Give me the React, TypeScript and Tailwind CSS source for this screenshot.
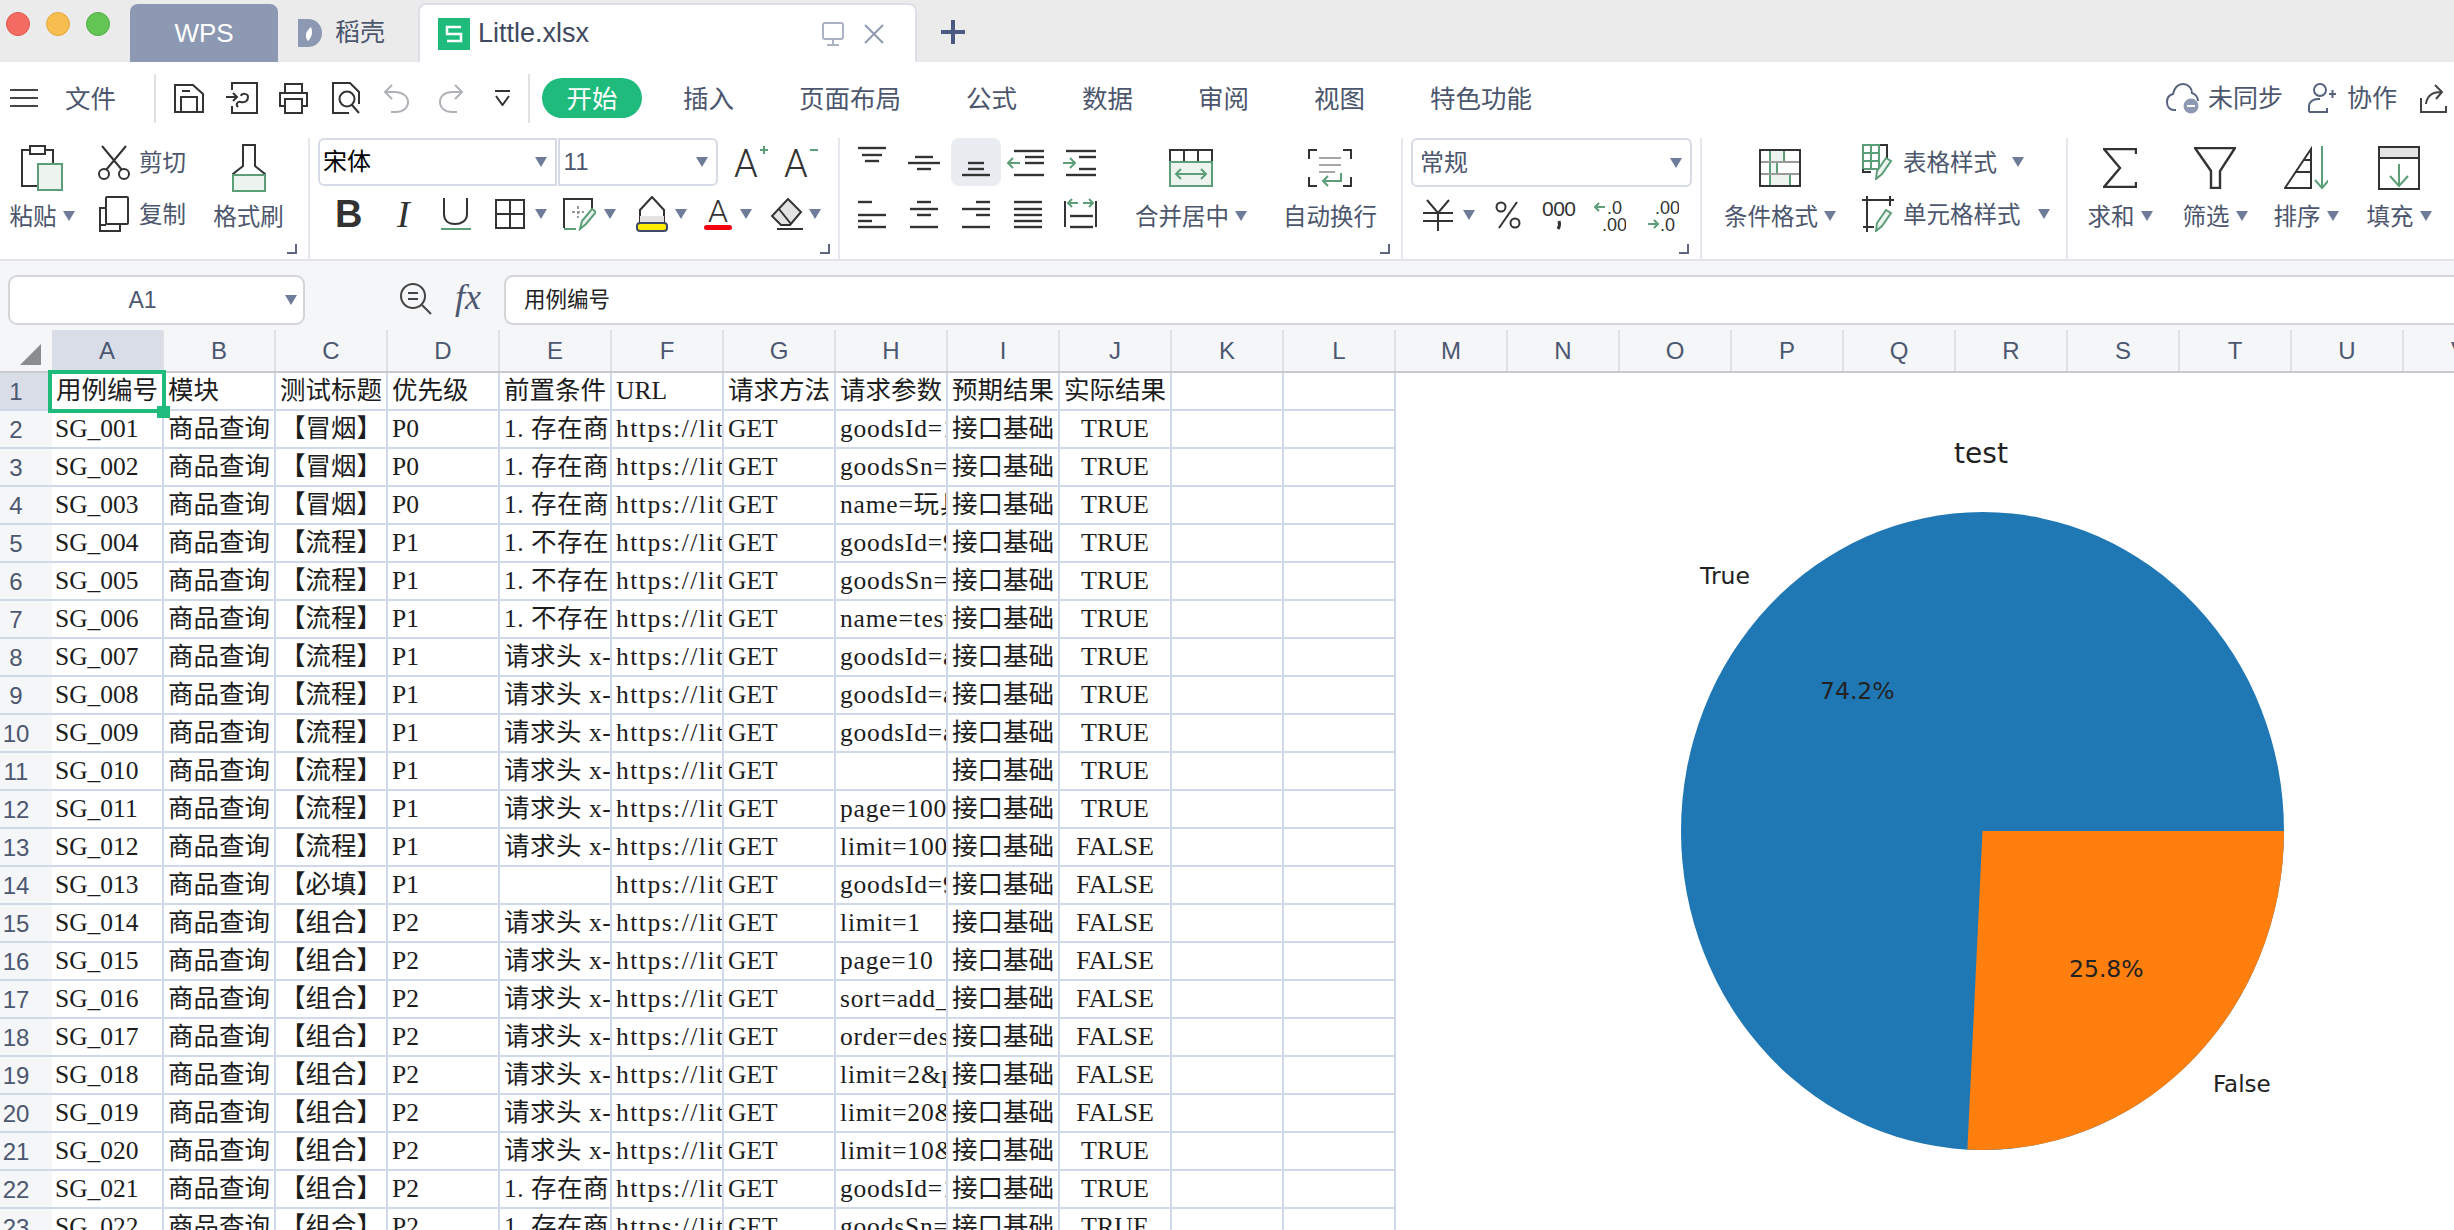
import type { ReactNode } from "react";

const DARK = "#333333";
const GREEN = "#5b9e78";
const PALE = "#edf4ef";

type RowData = {
  id: string;
  title: string;
  pri: string;
  pre: string;
  param: string;
  result: string;
};

const EXIST = "1. 存在商品信息";
const MISSING = "1. 不存在商品信息";
const HEAD = "请求头 x-litemall-token";

const rows: RowData[] = [
  { id: "SG_001", title: "【冒烟】", pri: "P0", pre: EXIST, param: "goodsId=1181000", result: "TRUE" },
  { id: "SG_002", title: "【冒烟】", pri: "P0", pre: EXIST, param: "goodsSn=1181000", result: "TRUE" },
  { id: "SG_003", title: "【冒烟】", pri: "P0", pre: EXIST, param: "name=玩具", result: "TRUE" },
  { id: "SG_004", title: "【流程】", pri: "P1", pre: MISSING, param: "goodsId=9999", result: "TRUE" },
  { id: "SG_005", title: "【流程】", pri: "P1", pre: MISSING, param: "goodsSn=9999", result: "TRUE" },
  { id: "SG_006", title: "【流程】", pri: "P1", pre: MISSING, param: "name=test", result: "TRUE" },
  { id: "SG_007", title: "【流程】", pri: "P1", pre: HEAD, param: "goodsId=abc", result: "TRUE" },
  { id: "SG_008", title: "【流程】", pri: "P1", pre: HEAD, param: "goodsId=abc", result: "TRUE" },
  { id: "SG_009", title: "【流程】", pri: "P1", pre: HEAD, param: "goodsId=abc", result: "TRUE" },
  { id: "SG_010", title: "【流程】", pri: "P1", pre: HEAD, param: "", result: "TRUE" },
  { id: "SG_011", title: "【流程】", pri: "P1", pre: HEAD, param: "page=10000", result: "TRUE" },
  { id: "SG_012", title: "【流程】", pri: "P1", pre: HEAD, param: "limit=1000", result: "FALSE" },
  { id: "SG_013", title: "【必填】", pri: "P1", pre: "", param: "goodsId=9999", result: "FALSE" },
  { id: "SG_014", title: "【组合】", pri: "P2", pre: HEAD, param: "limit=1", result: "FALSE" },
  { id: "SG_015", title: "【组合】", pri: "P2", pre: HEAD, param: "page=10", result: "FALSE" },
  { id: "SG_016", title: "【组合】", pri: "P2", pre: HEAD, param: "sort=add_time", result: "FALSE" },
  { id: "SG_017", title: "【组合】", pri: "P2", pre: HEAD, param: "order=desc", result: "FALSE" },
  { id: "SG_018", title: "【组合】", pri: "P2", pre: HEAD, param: "limit=2&page=1", result: "FALSE" },
  { id: "SG_019", title: "【组合】", pri: "P2", pre: HEAD, param: "limit=20&page=1", result: "FALSE" },
  { id: "SG_020", title: "【组合】", pri: "P2", pre: HEAD, param: "limit=10&page=1", result: "TRUE" },
  { id: "SG_021", title: "【组合】", pri: "P2", pre: EXIST, param: "goodsId=1181000", result: "TRUE" },
  { id: "SG_022", title: "【组合】", pri: "P2", pre: EXIST, param: "goodsSn=1181000", result: "TRUE" },
];

const headers = ["用例编号", "模块", "测试标题", "优先级", "前置条件", "URL", "请求方法", "请求参数", "预期结果", "实际结果", "", ""];
const letters = "ABCDEFGHIJKLMNOPQRSTUV".split("");

function Ico({ w, h, children, className }: { w: number; h: number; children: ReactNode; className?: string }) {
  return (
    <svg width={w} height={h} viewBox={`0 0 ${w} ${h}`} fill="none" stroke={DARK} strokeWidth={2} className={`shrink-0 ${className ?? ""}`}>
      {children}
    </svg>
  );
}

function Caret({ className }: { className?: string }) {
  return (
    <svg width={12} height={10} viewBox="0 0 12 10" className={`shrink-0 ${className ?? ""}`}>
      <path d="M0 0h12L6 10z" fill="#6f7c99" />
    </svg>
  );
}

function Corner({ className }: { className?: string }) {
  return (
    <svg width={10} height={10} viewBox="0 0 10 10" className={`shrink-0 self-end mb-[5px] ${className ?? ""}`}>
      <path d="M9 0v9H0" fill="none" stroke="#5d6880" strokeWidth={2} />
    </svg>
  );
}

function BigBtn({ label, icon, caret, className }: { label: string; icon: ReactNode; caret?: boolean; className?: string }) {
  return (
    <div className={`flex flex-col items-center shrink-0 ${className ?? ""}`}>
      <div className="flex h-[60px] items-center justify-center">{icon}</div>
      <div className="mt-[3px] flex h-[30px] items-center gap-[6px] text-[23.5px] whitespace-nowrap">
        <span className="mt-[3px]">{label}</span>
        {caret && <Caret />}
      </div>
    </div>
  );
}

function SmallBtn({ label, icon, caretGap }: { label: string; icon: ReactNode; caretGap?: string }) {
  return (
    <div className="flex h-[48px] items-center">
      <div className="flex w-[32px] justify-center">{icon}</div>
      <span className="ml-[9px] mt-[3px] text-[23.5px] whitespace-nowrap">{label}</span>
      {caretGap && <Caret className={caretGap} />}
    </div>
  );
}

function Brush({ x, y }: { x: number; y: number }) {
  return (
    <g transform={`translate(${x} ${y})`} stroke={GREEN} fill={PALE}>
      <path d="M2 22l1-8 9-13 5 3-9 13z" />
    </g>
  );
}

function AlignCell({ lines, active, arrow }: { lines: number[][]; active?: boolean; arrow?: ReactNode }) {
  return (
    <div className="flex h-[48px] w-[52px] justify-center">
      <div className={`h-[48px] w-[50px] rounded-[8px] ${active ? "bg-[#e9ecf1]" : ""}`}>
        <Ico w={50} h={48}>
          {lines.map((l, i) => (
            <line key={i} x1={l[0]} y1={l[2]} x2={l[1]} y2={l[2]} stroke={DARK} strokeWidth={2.4} />
          ))}
          {arrow}
        </Ico>
      </div>
    </div>
  );
}

function MenuRow() {
  return (
    <div className="flex h-[72px] items-center bg-white text-[25.5px] text-[#4c566d]">
      <Ico w={28} h={20} className="ml-[10px]">
        <path d="M0 2h28M0 10h28M0 18h28" stroke="#444" strokeWidth={2.2} />
      </Ico>
      <span className="ml-[27px] mt-[2px] w-[50px] whitespace-nowrap">文件</span>
      <div className="ml-[39px] h-[49px] w-[2px] bg-[#e0e2e6]" />
      <Ico w={30} h={29} className="ml-[18px]">
        <path d="M1 1h18l10 9v18H1z" />
        <path d="M7 27V13h16v14M8 7h8" />
      </Ico>
      <Ico w={32} h={32} className="ml-[22px]">
        <path d="M6 8V1h25v30H6v-7" />
        <path d="M0 15h11M7 11l4 4-4 4" />
        <path d="M12 25c-3-3 0-6 3-5 5 1 7-2 7-5 0-4-6-4-7-1" />
      </Ico>
      <Ico w={31} h={32} className="ml-[20px]">
        <path d="M7 11V2h17v9M7 24H2V11h27v13h-5" />
        <path d="M7 17h17v14H7z" />
      </Ico>
      <Ico w={29} h={33} className="ml-[23px]">
        <path d="M17 31H1V1h17l9 9v12" />
        <circle cx={15} cy={17} r={7.5} />
        <path d="M20 23l7 8" />
      </Ico>
      <Ico w={27} h={29} className="ml-[22px]">
        <path d="M9 1L2 8l7 7" stroke="#aeb1b6" />
        <path d="M2 8h10c7 0 13 4 13 10s-5 10-12 10H8" stroke="#aeb1b6" />
      </Ico>
      <Ico w={26} h={29} className="ml-[28px]">
        <path d="M17 1l7 7-7 7" stroke="#aeb1b6" />
        <path d="M24 8H14C7 8 2 12 2 18s5 10 12 10h5" stroke="#aeb1b6" />
      </Ico>
      <Ico w={17} h={16} className="ml-[30px]">
        <path d="M1 1h15" />
        <path d="M2 6l6.500 9L15 6" />
      </Ico>
      <div className="ml-[17px] h-[49px] w-[2px] bg-[#e0e2e6]" />
      <div className="ml-[12px] flex h-[40px] w-[100px] items-center justify-center rounded-full bg-[#1fbb7d] pt-[2px] text-white">开始</div>
      <div className="ml-[41px] mt-[2px] flex gap-[65px] whitespace-nowrap">
        <span>插入</span>
        <span>页面布局</span>
        <span>公式</span>
        <span>数据</span>
        <span>审阅</span>
        <span>视图</span>
        <span>特色功能</span>
      </div>
      <div className="ml-auto mr-[7px] flex items-center text-[25px]">
        <Ico w={34} h={32}>
          <path d="M10 28H8C3 28 1 24 1 20c0-4 2-7 6-8 1-6 5-10 10-10s9 4 9 9c3 1 6 4 6 8" stroke="#56627e" />
          <circle cx={25} cy={24} r={7.5} fill="#8d99b2" stroke="none" />
          <path d="M21 24h8" stroke="#fff" />
        </Ico>
        <span className="ml-[8px] mt-[2px] whitespace-nowrap">未同步</span>
        <Ico w={28} h={32} className="ml-[25px]">
          <circle cx={12} cy={8} r={6} stroke="#56627e" />
          <path d="M1 30v-6c0-4 4-7 9-7h2M1 30h18v-4M21 12h7M24.500 8v8" stroke="#56627e" />
        </Ico>
        <span className="ml-[11px] mt-[2px] whitespace-nowrap">协作</span>
        <Ico w={27} h={29} className="ml-[23px]">
          <path d="M1 14v14h25v-6M6 20c1-8 6-12 15-12M15 1l7 7-6 7" stroke="#444" />
        </Ico>
      </div>
    </div>
  );
}

function Ribbon() {
  return (
    <div className="box-border flex h-[127px] border-b-[2px] border-[#e3e4e8] bg-white pt-[4px] text-[#4c566d]">
      {/* clipboard */}
      <div className="box-border flex h-[121px] w-[310px] shrink-0 border-r-2 border-[#e6e8ed]">
        <BigBtn
          caret
          label="粘贴"
          className="ml-[8px] w-[68px]"
          icon={
            <Ico w={42} h={46}>
              <path d="M17 41H1V5h31v13" />
              <rect x={9} y={1} width={15} height={8} fill="#fff" />
              <rect x={17} y={19} width={24} height={26} fill={PALE} stroke={GREEN} />
            </Ico>
          }
        />
        <div className="ml-[22px] flex w-[100px] flex-col gap-[4px]">
          <SmallBtn
            label="剪切"
            icon={
              <Ico w={32} h={35}>
                <path d="M4 1l20 24M28 1L8 25" />
                <circle cx={6} cy={29} r={5} />
                <circle cx={26} cy={29} r={5} />
              </Ico>
            }
          />
          <SmallBtn
            label="复制"
            icon={
              <Ico w={30} h={36}>
                <path d="M7 29H1V12h6" />
                <path d="M1 29v6h20v-7" />
                <rect x={7} y={1} width={22} height={27} rx={1} />
              </Ico>
            }
          />
        </div>
        <BigBtn
          label="格式刷"
          className="ml-[15px] w-[71px]"
          icon={
            <Ico w={36} h={48}>
              <path d="M12 22V1h12v21l10 8v17H2V30z" />
              <path d="M2 31h32v16H2z" fill={PALE} stroke={GREEN} />
            </Ico>
          }
        />
        <Corner className="ml-[3px]" />
      </div>

      {/* font */}
      <div className="box-border flex h-[121px] w-[530px] shrink-0 border-r-2 border-[#e6e8ed]">
        <div className="ml-[8px] flex w-[500px] flex-col gap-[4px]">
          <div className="flex h-[48px] items-center">
            <div className="box-border flex h-[48px] w-[241px] items-center rounded-l-[6px] border-2 border-[#d6dbe7] pl-[3px] pr-[8px] text-[24px] text-black">
              <span>宋体</span>
              <Caret className="ml-auto" />
            </div>
            <div className="ml-[1px] box-border flex h-[48px] w-[162px] items-center rounded-r-[6px] border-2 border-[#d6dbe7] pl-[4px] pr-[8px] text-[24px] text-[#4c566d]">
              <span>11</span>
              <Caret className="ml-auto" />
            </div>
            <Ico w={34} h={36} className="ml-[16px]">
              <text x={0} y={33} fontSize={38} stroke="none" fill={DARK} fontFamily="Roboto" fontWeight={300}>A</text>
              <path d="M26 6h8M30 2v8" stroke={GREEN} />
            </Ico>
            <Ico w={34} h={36} className="ml-[16px]">
              <text x={0} y={33} fontSize={38} stroke="none" fill={DARK} fontFamily="Roboto" fontWeight={300}>A</text>
              <path d="M26 6h8" stroke={GREEN} />
            </Ico>
          </div>
          <div className="flex h-[48px] items-center">
            <span className="ml-[17px] w-[26px] text-[38px] font-bold text-[#333] [font-family:'Liberation_Sans',sans-serif]">B</span>
            <span className="ml-[36px] w-[18px] text-[38px] italic text-[#333] [font-family:'Liberation_Serif',serif]">I</span>
            <Ico w={30} h={32} className="ml-[31px]">
              <path d="M3 0v16c0 7 5 10 11 10s12-3 12-10V0" />
              <path d="M0 31h30" stroke={GREEN} />
            </Ico>
            <Ico w={30} h={30} className="ml-[24px]">
              <rect x={1} y={1} width={28} height={28} />
              <path d="M15 1v28M1 15h28" />
            </Ico>
            <Caret className="ml-[10px]" />
            <Ico w={33} h={33} className="ml-[16px]">
              <path d="M1 30V1h28v12" />
              <path d="M15 8v12M9 14h12" stroke="#999" strokeDasharray="3 2" />
              <path d="M1 31h12" stroke={GREEN} />
              <path d="M17 31l2-8 10-12 4 3-10 12z" stroke={GREEN} fill={PALE} />
            </Ico>
            <Caret className="ml-[8px]" />
            <Ico w={34} h={36} className="ml-[19px]">
              <path d="M17 1L5 14v13h24V14z" />
              <path d="M5 20h24v7H5z" fill="#e3e3e3" stroke="none" />
              <rect x={2} y={27} width={30} height={8} rx={3} fill="#ffee00" stroke="#3f4a68" />
            </Ico>
            <Caret className="ml-[6px]" />
            <Ico w={30} h={34} className="ml-[16px]">
              <text x={15} y={25} textAnchor="middle" fontSize={32} stroke="none" fill={DARK} fontFamily="Roboto" fontWeight={300}>A</text>
              <rect x={1} y={28} width={28} height={5} rx={2.500} fill="#f5000f" stroke="none" />
            </Ico>
            <Caret className="ml-[7px]" />
            <Ico w={36} h={32} className="ml-[17px]">
              <path d="M19 1l13 13-11 13H12L3 18z" fill="#e3e3e3" />
              <path d="M10 11l12 15M8 31h26" />
            </Ico>
            <Caret className="ml-[4px]" />
          </div>
        </div>
        <Corner className="ml-[2px]" />
      </div>

      {/* alignment */}
      <div className="box-border flex h-[121px] w-[563px] shrink-0 border-r-2 border-[#e6e8ed]">
        <div className="ml-[6px] grid w-[260px] shrink-0 grid-cols-5 content-start gap-y-[4px]">
          <AlignCell lines={[[11, 39, 10], [15, 35, 17], [18, 32, 23]]} />
          <AlignCell lines={[[16, 34, 19], [9, 41, 25], [18, 32, 31]]} />
          <AlignCell active lines={[[17, 33, 25], [17, 33, 31], [11, 39, 37]]} />
          <AlignCell
            lines={[[11, 41, 13], [22, 41, 19], [22, 41, 25], [11, 41, 37]]}
            arrow={<path d="M17 25H6M10 20l-5 5 5 5" stroke={GREEN} />}
          />
          <AlignCell
            lines={[[11, 41, 13], [24, 41, 19], [24, 41, 31], [11, 41, 37]]}
            arrow={<path d="M8 25h11M15 20l5 5-5 5" stroke={GREEN} />}
          />
          <AlignCell lines={[[11, 25, 12], [11, 39, 25], [11, 25, 31], [11, 39, 37]]} />
          <AlignCell lines={[[18, 32, 12], [11, 39, 19], [18, 32, 25], [11, 39, 37]]} />
          <AlignCell lines={[[25, 39, 12], [11, 39, 19], [25, 39, 25], [11, 39, 37]]} />
          <AlignCell lines={[[11, 39, 12], [11, 39, 19], [11, 39, 25], [11, 39, 31], [11, 39, 37]]} />
          <AlignCell
            lines={[[15, 38, 26], [15, 38, 37]]}
            arrow={
              <>
                <path d="M10 11v26M41 11v26" />
                <path d="M14 13h9M17 9l-4 4 4 4M28 13h9M34 9l4 4-4 4" stroke={GREEN} />
              </>
            }
          />
        </div>
        <BigBtn
          caret
          label="合并居中"
          className="ml-[24px] w-[122px]"
          icon={
            <Ico w={44} h={38}>
              <path d="M1 13V1h42v12M15 1v12M29 1v12" />
              <rect x={1} y={13} width={42} height={24} fill={PALE} stroke={GREEN} />
              <path d="M7 25h30M12 20l-5 5 5 5M32 20l5 5-5 5" stroke={GREEN} />
            </Ico>
          }
        />
        <BigBtn
          label="自动换行"
          className="ml-[30px] w-[96px]"
          icon={
            <Ico w={44} h={38}>
              <path d="M9 1H1v9M35 1h8v9M1 28v9h8M43 28v9h-8" />
              <path d="M11 9h22M11 16h22M11 23h16" stroke="#a6a6a6" />
              <path d="M33 24v8H15M20 27l-5 5 5 5" stroke={GREEN} />
            </Ico>
          }
        />
        <Corner className="ml-[2px]" />
      </div>

      {/* number format */}
      <div className="box-border flex h-[121px] w-[299px] shrink-0 border-r-2 border-[#e6e8ed]">
        <div className="ml-[8px] flex w-[281px] shrink-0 flex-col gap-[4px]">
          <div className="box-border flex h-[49px] items-center rounded-[6px] border-2 border-[#d6dbe7] pl-[7px] pr-[8px] text-[24px]">
            <span>常规</span>
            <Caret className="ml-auto" />
          </div>
          <div className="flex h-[47px] items-center">
            <Ico w={30} h={32} className="ml-[12px]">
              <path d="M4 1l11 13L26 1M15 14v18M0 14h30M0 22h30" />
            </Ico>
            <Caret className="ml-[10px]" />
            <Ico w={26} h={28} className="ml-[20px]">
              <circle cx={6} cy={6} r={4.500} />
              <circle cx={20} cy={22} r={4.500} />
              <path d="M22 1L4 27" />
            </Ico>
            <Ico w={34} h={32} className="ml-[21px]">
              <text x={0} y={17} fontSize={21} stroke="none" fill={DARK} fontFamily="Liberation Sans" textLength={34}>000</text>
              <path d="M17 22c1 3 1 5-1 8" strokeWidth={3} />
            </Ico>
            <Ico w={32} h={34} className="ml-[18px]">
              <path d="M11 9H1M5 5L1 9l4 4" stroke={GREEN} />
              <text x={13} y={16} fontSize={18} stroke="none" fill={DARK} fontFamily="Liberation Sans">.0</text>
              <text x={8} y={33} fontSize={18} stroke="none" fill={DARK} fontFamily="Liberation Sans">.00</text>
            </Ico>
            <Ico w={32} h={34} className="ml-[21px]">
              <text x={8} y={16} fontSize={18} stroke="none" fill={DARK} fontFamily="Liberation Sans">.00</text>
              <path d="M1 26h10M7 22l4 4-4 4" stroke={GREEN} />
              <text x={13} y={33} fontSize={18} stroke="none" fill={DARK} fontFamily="Liberation Sans">.0</text>
            </Ico>
          </div>
        </div>
        <Corner className="-ml-[13px]" />
      </div>

      {/* table styles */}
      <div className="box-border flex h-[121px] w-[366px] shrink-0 border-r-2 border-[#e6e8ed]">
        <BigBtn
          caret
          label="条件格式"
          className="ml-[18px] w-[120px]"
          icon={
            <Ico w={42} h={38}>
              <path d="M11 1h14v12H18v12h-7z" fill={PALE} stroke={GREEN} />
              <path d="M11 25h20v12H11z" fill={PALE} stroke={GREEN} />
              <path d="M1 13h40M1 25h40" stroke="#999" />
              <rect x={1} y={1} width={40} height={36} />
            </Ico>
          }
        />
        <div className="ml-[22px] flex flex-col gap-[4px]">
          <SmallBtn
            label="表格样式"
            caretGap="ml-[15px]"
            icon={
              <Ico w={32} h={36}>
                <path d="M17 1h8v19" />
                <path d="M1 1h16v24H1zM1 9h16M1 17h16M9 1v24" stroke={GREEN} />
                <path d="M1 25v3h8" />
                <Brush x={12} y={13} />
              </Ico>
            }
          />
          <SmallBtn
            label="单元格样式"
            caretGap="ml-[17px]"
            icon={
              <Ico w={32} h={36}>
                <path d="M5 0v36M0 4h32M1 31h11M28 0v10" />
                <Brush x={12} y={13} />
              </Ico>
            }
          />
        </div>
      </div>

      {/* editing */}
      <div className="flex h-[121px] flex-1">
        <BigBtn
          caret
          label="求和"
          className="ml-[17px] w-[70px]"
          icon={
            <Ico w={34} h={40}>
              <path d="M33 6V1H1l16 19L1 39h32v-5" strokeWidth={2.400} />
            </Ico>
          }
        />
        <BigBtn
          caret
          label="筛选"
          className="ml-[25px] w-[70px]"
          icon={
            <Ico w={42} h={42}>
              <path d="M1 1h40L26 24v17h-9V24z" strokeWidth={2.400} />
            </Ico>
          }
        />
        <BigBtn
          caret
          label="排序"
          className="ml-[21px] w-[70px]"
          icon={
            <Ico w={44} h={44}>
              <path d="M27 3L1 42h26zM12 26h15M19 14h8" />
              <path d="M38 0v42M31 34l7 8 7-8" stroke={GREEN} />
            </Ico>
          }
        />
        <BigBtn
          caret
          label="填充"
          className="ml-[23px] w-[70px]"
          icon={
            <Ico w={42} h={44}>
              <rect x={1} y={1} width={40} height={42} />
              <path d="M1 1h40v11H1z" fill="#e3e3e3" />
              <path d="M21 18v22M12 30l9 10 9-10" stroke={GREEN} />
            </Ico>
          }
        />
      </div>
    </div>
  );
}

function FormulaBar() {
  return (
    <div className="flex h-[69px] bg-[#f5f6f8] pt-[14px]">
      <div className="relative ml-[8px] box-border flex h-[50px] w-[297px] items-center justify-center rounded-[9px] border-2 border-[#d4d5d8] bg-white pr-[28px] text-[23px] text-[#4c5770]">
        <span>A1</span>
        <Caret className="absolute right-[6px] top-[18px]" />
      </div>
      <Ico w={32} h={32} className="ml-[95px] mt-[8px]">
        <circle cx={13} cy={13} r={12} stroke="#444" />
        <path d="M8 10h10M8 16h10" stroke="#444" />
        <path d="M22 22l9 9" stroke="#444" />
      </Ico>
      <span className="ml-[23px] w-[30px] text-[36px] italic leading-[44px] text-[#4c5770] [font-family:'Liberation_Serif',serif]">fx</span>
      <div className="ml-[19px] box-border flex h-[50px] flex-1 items-center rounded-l-[9px] border-2 border-r-0 border-[#d4d5d8] bg-white pl-[18px] text-[21.500px] text-[#222]">
        用例编号
      </div>
    </div>
  );
}

function ColumnHeader() {
  return (
    <div className="flex h-[43px] border-b-2 border-[#c9cacd] bg-[#f5f6f8] text-[24px] text-[#4c5770]">
      <div className="flex w-[52px] shrink-0 items-center pl-[20px]">
        <svg width={21} height={21} viewBox="0 0 21 21" className="mt-[8px]">
          <path d="M21 0v21H0z" fill="#8b8c8e" />
        </svg>
      </div>
      {letters.map((l, i) => (
        <div
          key={l}
          className={`box-border flex w-[112px] shrink-0 items-center justify-center border-r-2 border-[#dfe0e3] ${i === 0 ? "bg-[#d9dde8]" : ""}`}
        >
          {l}
        </div>
      ))}
    </div>
  );
}

function Cell({ children, center, extra }: { children?: ReactNode; center?: boolean; extra?: string }) {
  return (
    <div
      className={`box-border h-full w-[112px] shrink-0 overflow-hidden whitespace-nowrap border-r-2 border-[#d0d9ea] leading-[36px] ${center ? "text-center" : "pl-[4px]"} ${extra ?? ""}`}
    >
      {children}
    </div>
  );
}

function RowLabel({ n, active }: { n: number; active?: boolean }) {
  return (
    <div className={`h-full w-[52px] shrink-0 text-[#4c5770] [font-family:'Liberation_Sans',sans-serif] ${active ? "bg-[#d9dde8]" : "bg-[#f5f6f8]"}`}>
      <div className="w-[32px] text-center text-[24px] leading-[38px]">{n}</div>
    </div>
  );
}

function Sheet() {
  return (
    <div className="relative w-[1396px] shrink-0 text-[25.5px] text-[#1d1d1d] [font-family:'Liberation_Serif','Noto_Sans_CJK_SC',serif]">
      <div className="box-border flex h-[38px] border-b-2 border-[#d0d9ea]">
        <RowLabel n={1} active />
        {headers.map((h, i) => (
          <Cell key={i} center={i === 9}>
            {h}
          </Cell>
        ))}
      </div>
      {rows.map((r, i) => (
        <div key={r.id} className="box-border flex h-[38px] border-b-2 border-[#d0d9ea]">
          <RowLabel n={i + 2} />
          <Cell>
            <span className="-ml-[1px]">{r.id}</span>
          </Cell>
          <Cell>商品查询</Cell>
          <Cell>{r.title}</Cell>
          <Cell>{r.pri}</Cell>
          <Cell extra="tracking-[0.5px]">{r.pre}</Cell>
          <Cell extra="tracking-[1.5px]">https://litemall.com</Cell>
          <Cell>GET</Cell>
          <Cell extra="tracking-[0.8px]">{r.param}</Cell>
          <Cell>接口基础</Cell>
          <Cell center extra="text-[26px]">{r.result}</Cell>
          <Cell />
          <Cell />
        </div>
      ))}
      <div className="absolute left-[48px] top-[-3px] box-border h-[43px] w-[118px] border-[4px] border-[#1fbb7d]" />
      <div className="absolute left-[157px] top-[33px] h-[12px] w-[13px] bg-[#1fbb7d]" />
    </div>
  );
}

function Chart() {
  return (
    <div className="h-[857px] flex-1 bg-white">
      <svg width={1058} height={857} viewBox="1396 373 1058 857">
        <ellipse cx={1982.500} cy={831} rx={301.500} ry={319} fill="#1f77b4" />
        <path d="M1982.500 831H2284A301.500 319 0 0 1 1967.400 1149.600Z" fill="#ff7f0e" />
        <g fontFamily="DejaVu Sans" fill="#222">
          <text x={1981} y={463} fontSize={28} textAnchor="middle">test</text>
          <text x={1700} y={584} fontSize={23.500}>True</text>
          <text x={1820} y={699} fontSize={23.500}>74.2%</text>
          <text x={2069} y={977} fontSize={23.500}>25.8%</text>
          <text x={2213} y={1092} fontSize={23}>False</text>
        </g>
      </svg>
    </div>
  );
}

export default function App() {
  return (
    <div className="h-[1230px] w-[2454px] overflow-hidden bg-white [font-family:'Liberation_Sans','Noto_Sans_CJK_SC',sans-serif]">
      {/* title bar */}
      <div className="flex h-[62px] bg-[#ebebec]">
        <div className="ml-[6px] mt-[12px] h-[24px] w-[24px] shrink-0 rounded-full border border-[#e0574f] bg-[#f46b62]" />
        <div className="ml-[16px] mt-[12px] h-[24px] w-[24px] shrink-0 rounded-full border border-[#e0a83f] bg-[#f7bd4f]" />
        <div className="ml-[16px] mt-[12px] h-[24px] w-[24px] shrink-0 rounded-full border border-[#52ad47] bg-[#62c554]" />
        <div className="ml-[20px] mt-[4px] flex w-[148px] items-center justify-center rounded-t-[8px] bg-[#8d99b2] text-[26px] text-white">WPS</div>
        <div className="ml-[20px] mt-[4px] flex w-[120px] items-center text-[25px] text-[#4c566d]">
          <svg width={24} height={28} viewBox="0 0 24 28">
            <path d="M0 0h10c8 0 14 6 14 14s-6 14-14 14H0z" fill="#8d99b2" />
            <path d="M10 22c-4-5-2-10 3-14 2 5 1 10-3 14z" fill="#fff" />
          </svg>
          <span className="ml-[13px] whitespace-nowrap">稻壳</span>
        </div>
        <div className="mt-[3px] box-border flex w-[499px] items-center rounded-t-[8px] border-x-2 border-t-2 border-[#dcdfe6] bg-white pl-[18px] text-[27px] text-[#3f4960]">
          <svg width={32} height={32} viewBox="0 0 32 32" className="shrink-0">
            <rect width={32} height={32} fill="#1fbb7d" />
            <path d="M23 9H9v7h14v7H9" fill="none" stroke="#fff" strokeWidth={2.500} />
          </svg>
          <span className="ml-[8px] whitespace-nowrap">Little.xlsx</span>
          <Ico w={22} h={24} className="ml-[233px]">
            <rect x={1} y={1} width={20} height={16} rx={2} stroke="#aab2c4" />
            <path d="M11 17v6M5 23h12" stroke="#aab2c4" />
          </Ico>
          <Ico w={20} h={20} className="ml-[20px]">
            <path d="M1 1l18 18M19 1L1 19" stroke="#8f9ab2" />
          </Ico>
        </div>
        <Ico w={24} h={24} className="ml-[24px] mt-[20px]">
          <path d="M12 0v24M0 12h24" stroke="#4a5a82" strokeWidth={4} />
        </Ico>
      </div>

      <MenuRow />
      <Ribbon />
      <FormulaBar />
      <ColumnHeader />

      <div className="flex">
        <Sheet />
        <Chart />
      </div>
    </div>
  );
}
